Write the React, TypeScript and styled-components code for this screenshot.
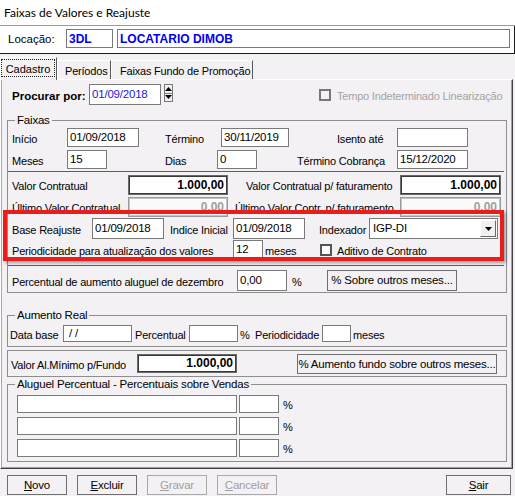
import styled, { createGlobalStyle, css } from "styled-components"

const BG = "#f4f1f4"
const EDGE = "#7a7a7a"
const GROUP = "#8e8e8e"

const GlobalStyle = createGlobalStyle`
  html, body {
    margin: 0;
    padding: 0;
    background: ${BG};
  }
  body {
    font-family: "Liberation Sans", Arial, sans-serif;
    font-size: 11px;
    color: #000;
  }
`

const Window = styled.div`
  width: 515px;
  height: 496px;
  overflow: hidden;
  background: ${BG};
  letter-spacing: -0.2px;
  display: flex;
  flex-direction: column;
`

const TitleBar = styled.div`
  height: 25px;
  flex: none;
  background: #fff;
  border-bottom: 1px solid #9a9a9a;
  display: flex;
  align-items: center;
  padding-left: 4px;
  font-family: Lato, "Liberation Sans", sans-serif;
  font-size: 12px;
  letter-spacing: 0;
`

const LocBar = styled.div`
  height: 24px;
  flex: none;
  background: #fff;
  border-bottom: 1px solid #1a1a1a;
  border-right: 1px solid #1a1a1a;
  display: flex;
  align-items: flex-start;
  padding: 3px 0 0 8px;
`

const LocLabel = styled.span`
  width: 58px;
  padding-top: 4px;
  font-size: 11.5px;
  letter-spacing: 0;
`

const LocField = styled.div<{ $w: number; $ml?: number }>`
  width: ${(p) => p.$w}px;
  margin-left: ${(p) => p.$ml ?? 0}px;
  height: 19px;
  box-sizing: border-box;
  border: 1px solid ${EDGE};
  padding: 0 2px;
  color: #0000f0;
  font-weight: bold;
  font-size: 12px;
  letter-spacing: 0;
  display: flex;
  align-items: center;
`

const TabStrip = styled.div`
  height: 25px;
  flex: none;
  display: flex;
  align-items: flex-end;
  position: relative;
  z-index: 1;
`

const Tab = styled.div<{ $w: number; $pl?: number; $active?: boolean }>`
  width: ${(p) => p.$w}px;
  height: 19px;
  box-sizing: border-box;
  border-top: 1px solid #fff;
  border-left: 1px solid #fff;
  border-right: 1px solid #5a5a5a;
  display: flex;
  align-items: center;
  justify-content: flex-start;
  padding: 2px 0 0 ${(p) => p.$pl ?? 0}px;
  font-size: 11px;
  white-space: nowrap;
  overflow: hidden;
  ${(p) =>
    p.$active &&
    css`
      height: 23px;
      margin-bottom: -1px;
      background: ${BG};
      align-items: flex-end;
      padding: 0 0 3px 0;
    `}
`

const FocusRing = styled.span`
  width: 54px;
  height: 18px;
  box-sizing: border-box;
  border: 1px dotted #222;
  display: flex;
  align-items: center;
  justify-content: center;
  padding-top: 1px;
  letter-spacing: 0;
`

const TabPanel = styled.div`
  height: 390px;
  flex: none;
  margin-right: 2px;
  box-sizing: border-box;
  border-top: 1px solid #fff;
  border-left: 1px solid #fff;
  border-right: 1px solid #404040;
  border-bottom: 1px solid #404040;
  box-shadow: inset -1px -1px 0 #a0a0a0, inset 1px 0 0 #a8a8a8;
  padding: 0 5px 0 6px;
  display: flex;
  flex-direction: column;
`

const Row = styled.div<{ $h: number; $mt?: number; $pl?: number }>`
  height: ${(p) => p.$h}px;
  margin-top: ${(p) => p.$mt ?? 0}px;
  padding-left: ${(p) => p.$pl ?? 4}px;
  display: flex;
  align-items: stretch;
  flex: none;
`

const Label = styled.span<{ $w?: number; $ml?: number; $muted?: boolean }>`
  width: ${(p) => (p.$w ? `${p.$w}px` : "auto")};
  margin-left: ${(p) => p.$ml ?? 0}px;
  flex: none;
  display: flex;
  align-items: center;
  padding-top: 2px;
  white-space: nowrap;
  color: ${(p) => (p.$muted ? "#a3a3a3" : "#000")};
`

const BoldLabel = styled(Label)`
  font-weight: bold;
  font-size: 11.5px;
  letter-spacing: 0;
`

const TextBox = styled.div<{ $w: number; $ml?: number; $blue?: boolean }>`
  width: ${(p) => p.$w}px;
  margin-left: ${(p) => p.$ml ?? 0}px;
  flex: none;
  box-sizing: border-box;
  background: #fff;
  border: 1px solid ${EDGE};
  padding: 0 2px 2px;
  display: flex;
  align-items: center;
  font-size: 11.5px;
  color: ${(p) => (p.$blue ? "#1a1adc" : "#000")};
`

const ValueBox = styled.div<{ $w: number; $disabled?: boolean }>`
  width: ${(p) => p.$w}px;
  flex: none;
  box-sizing: border-box;
  background: ${(p) => (p.$disabled ? "#fafafa" : "#fff")};
  border: 1px solid ${(p) => (p.$disabled ? "#9a9a9a" : "#6a6a6a")};
  box-shadow: inset 0 0 0 1px ${(p) => (p.$disabled ? "#c4c4c4" : "#3a3a3a")};
  padding: 0 3px 1px;
  display: flex;
  align-items: center;
  justify-content: flex-end;
  font-weight: bold;
  font-size: 12px;
  letter-spacing: 0;
  color: ${(p) => (p.$disabled ? "#a0a0a0" : "#000")};
`

const Spin = styled.div`
  width: 9px;
  height: 18px;
  margin-left: 3px;
  box-sizing: border-box;
  border: 1px solid ${EDGE};
  background: #f0f0f0;
  display: flex;
  flex-direction: column;
  align-self: flex-start;
`

const SpinHalf = styled.span`
  flex: 1;
  display: flex;
  align-items: center;
  justify-content: center;
  & + & {
    border-top: 1px solid ${EDGE};
  }
`

const Check = styled.span<{ $disabled?: boolean; $ml?: number }>`
  width: 12px;
  height: 12px;
  margin-left: ${(p) => p.$ml ?? 0}px;
  flex: none;
  align-self: center;
  box-sizing: border-box;
  border: 2px solid ${(p) => (p.$disabled ? "#777" : "#555")};
  background: ${(p) => (p.$disabled ? BG : "#fdfdfd")};
`

const Combo = styled.div<{ $w: number }>`
  width: ${(p) => p.$w}px;
  flex: none;
  box-sizing: border-box;
  background: #fff;
  border: 1px solid ${EDGE};
  display: flex;
  align-items: stretch;
  font-size: 11.5px;
`

const ComboText = styled.span`
  flex: 1;
  display: flex;
  align-items: center;
  padding: 0 0 1px 3px;
`

const DropButton = styled.span`
  width: 16px;
  margin: 1px;
  box-sizing: border-box;
  background: #f0f0f0;
  border-top: 1px solid #fff;
  border-left: 1px solid #fff;
  border-right: 1px solid #6a6a6a;
  border-bottom: 1px solid #6a6a6a;
  display: flex;
  align-items: center;
  justify-content: center;
`

const Button = styled.button<{ $w: number; $ml?: number; $disabled?: boolean }>`
  width: ${(p) => p.$w}px;
  margin-left: ${(p) => p.$ml ?? 0}px;
  flex: none;
  box-sizing: border-box;
  height: 100%;
  background: ${BG};
  border: 1px solid ${(p) => (p.$disabled ? "#a8a8a8" : "#6e6e6e")};
  border-radius: 0;
  padding: 0 0 1px;
  font-family: "Liberation Sans", Arial, sans-serif;
  font-size: 11.5px;
  letter-spacing: -0.2px;
  color: ${(p) => (p.$disabled ? "#a0a0a0" : "#000")};
  display: flex;
  align-items: center;
  justify-content: center;
  u {
    text-decoration-thickness: 1px;
    text-underline-offset: 1px;
  }
`

const SearchRow = styled(Row)`
  padding-left: 5px;
`

const Group = styled.fieldset<{ $mt: number; $pb: number }>`
  margin: ${(p) => p.$mt}px 0 0;
  padding: 0 0 ${(p) => p.$pb}px;
  min-width: 0;
  border: 1px solid ${GROUP};
  display: flex;
  flex-direction: column;
  flex: none;
`

const Legend = styled.legend`
  margin-left: 7px;
  padding: 0 2px;
  height: 13px;
  line-height: 13px;
  font-size: 11.5px;
`

const Separator = styled.div<{ $mt: number }>`
  height: 1px;
  margin: ${(p) => p.$mt}px 2px 0 0;
  background: #5e5e5e;
  flex: none;
`

const ReajusteArea = styled.div`
  position: relative;
  margin-top: 1px;
  display: flex;
  flex-direction: column;
`

const Highlight = styled.div`
  position: absolute;
  top: -8px;
  left: -5px;
  right: 2px;
  bottom: -2px;
  border: 4px solid #ea1c1c;
  box-shadow: 2px 2px 3px rgba(0, 0, 0, 0.35);
  pointer-events: none;
`

const ValorPanel = styled.div`
  margin-top: 3px;
  height: 27px;
  flex: none;
  box-sizing: border-box;
  border: 1px solid ${GROUP};
  padding: 3px 9px 0 3px;
  display: flex;
  align-items: flex-start;
  justify-content: space-between;
`

const ButtonBar = styled.div`
  height: 20px;
  margin-top: 6px;
  padding: 0 4px 0 7px;
  display: flex;
  gap: 10px;
  flex: none;
`

const Spacer = styled.span`
  flex: 1;
`

function Arrow({ up }: { up?: boolean }) {
  return (
    <svg width="7" height="4" viewBox="0 0 7 4">
      <path d={up ? "M0 4 L3.5 0 L7 4 Z" : "M0 0 L7 0 L3.5 4 Z"} fill="#000" />
    </svg>
  )
}

export default function App() {
  return (
    <>
      <GlobalStyle />
      <Window>
        <TitleBar>Faixas de Valores e Reajuste</TitleBar>
        <LocBar>
          <LocLabel>Locação:</LocLabel>
          <LocField $w={47}>3DL</LocField>
          <LocField $w={393} $ml={4}>
            LOCATARIO DIMOB
          </LocField>
        </LocBar>

        <TabStrip>
          <Tab $w={57} $active>
            <FocusRing>Cadastro</FocusRing>
          </Tab>
          <Tab $w={54} $pl={7}>
            Períodos
          </Tab>
          <Tab $w={142} $pl={8}>
            Faixas Fundo de Promoção
          </Tab>
        </TabStrip>

        <TabPanel>
          <SearchRow $h={21} $mt={4}>
            <BoldLabel $w={77}>Procurar por:</BoldLabel>
            <TextBox $w={72} $blue>
              01/09/2018
            </TextBox>
            <Spin>
              <SpinHalf>
                <Arrow up />
              </SpinHalf>
              <SpinHalf>
                <Arrow />
              </SpinHalf>
            </Spin>
            <Check $disabled $ml={146} />
            <Label $ml={6} $muted>
              Tempo Indeterminado Linearização
            </Label>
          </SearchRow>

          <Group $mt={9} $pb={1}>
            <Legend>Faixas</Legend>
            <Row $h={19} $mt={1}>
              <Label $w={55}>Início</Label>
              <TextBox $w={72}>01/09/2018</TextBox>
              <Label $w={56} $ml={26}>
                Término
              </Label>
              <TextBox $w={68}>30/11/2019</TextBox>
              <Label $w={60} $ml={48}>
                Isento até
              </Label>
              <TextBox $w={71} />
            </Row>
            <Row $h={19} $mt={3}>
              <Label $w={55}>Meses</Label>
              <TextBox $w={40}>15</TextBox>
              <Label $w={52} $ml={58}>
                Dias
              </Label>
              <TextBox $w={40}>0</TextBox>
              <Label $w={100} $ml={40}>
                Término Cobrança
              </Label>
              <TextBox $w={71}>15/12/2020</TextBox>
            </Row>
            <Separator $mt={2} />
            <Row $h={20} $mt={3}>
              <Label $w={116}>Valor Contratual</Label>
              <ValueBox $w={100}>1.000,00</ValueBox>
              <Label $w={154} $ml={18}>
                Valor Contratual p/ faturamento
              </Label>
              <ValueBox $w={101}>1.000,00</ValueBox>
            </Row>
            <Row $h={20} $mt={2}>
              <Label $w={116}>Último Valor Contratual</Label>
              <ValueBox $w={100} $disabled>
                0,00
              </ValueBox>
              <Label $w={165} $ml={7}>
                Último Valor Contr. p/ faturamento
              </Label>
              <ValueBox $w={101} $disabled>
                0,00
              </ValueBox>
            </Row>

            <ReajusteArea>
              <Row $h={21}>
                <Label $w={80}>Base Reajuste</Label>
                <TextBox $w={72}>01/09/2018</TextBox>
                <Label $w={63} $ml={6}>
                  Indice Inicial
                </Label>
                <TextBox $w={72}>01/09/2018</TextBox>
                <Label $w={50} $ml={14}>
                  Indexador
                </Label>
                <Combo $w={129}>
                  <ComboText>IGP-DI</ComboText>
                  <DropButton>
                    <Arrow />
                  </DropButton>
                </Combo>
              </Row>
              <Row $h={19} $mt={1}>
                <Label $w={221}>Periodicidade para atualização dos valores</Label>
                <TextBox $w={30}>12</TextBox>
                <Label $w={55} $ml={2}>
                  meses
                </Label>
                <Check />
                <Label $ml={5}>Aditivo de Contrato</Label>
              </Row>
              <Highlight />
            </ReajusteArea>

            <Separator $mt={6} />
            <Row $h={21} $mt={4}>
              <Label $w={225}>Percentual de aumento aluguel de dezembro</Label>
              <TextBox $w={50}>0,00</TextBox>
              <Label $w={35} $ml={5}>
                %
              </Label>
              <Button $w={130}>% Sobre outros meses...</Button>
            </Row>
          </Group>

          <Group $mt={16} $pb={4}>
            <Legend>Aumento Real</Legend>
            <Row $h={17} $mt={3} $pl={2}>
              <Label $w={53}>Data base</Label>
              <TextBox $w={69}>&nbsp;/ /</TextBox>
              <Label $w={54} $ml={3}>
                Percentual
              </Label>
              <TextBox $w={49} />
              <Label $w={15} $ml={2}>
                %
              </Label>
              <Label $w={67}>Periodicidade</Label>
              <TextBox $w={29} />
              <Label $ml={2}>meses</Label>
            </Row>
          </Group>

          <ValorPanel>
            <Row $h={19} $pl={0}>
              <Label $w={126}>Valor Al.Mínimo p/Fundo</Label>
              <ValueBox $w={100}>1.000,00</ValueBox>
            </Row>
            <Row $h={20} $pl={0}>
              <Button $w={200}>% Aumento fundo sobre outros meses...</Button>
            </Row>
          </ValorPanel>

          <Group $mt={1} $pb={4}>
            <Legend>Aluguel Percentual - Percentuais sobre Vendas</Legend>
            {[0, 1, 2].map((i) => (
              <Row key={i} $h={18} $mt={4} $pl={9}>
                <TextBox $w={220} />
                <TextBox $w={40} $ml={2} />
                <Label $ml={4}>%</Label>
              </Row>
            ))}
          </Group>
        </TabPanel>

        <ButtonBar>
          <Button $w={60}>
            <u>N</u>ovo
          </Button>
          <Button $w={60}>
            <u>E</u>xcluir
          </Button>
          <Button $w={60} $disabled>
            <u>G</u>ravar
          </Button>
          <Button $w={60} $disabled>
            <u>C</u>ancelar
          </Button>
          <Spacer />
          <Button $w={65}>
            <u>S</u>air
          </Button>
        </ButtonBar>
      </Window>
    </>
  )
}
